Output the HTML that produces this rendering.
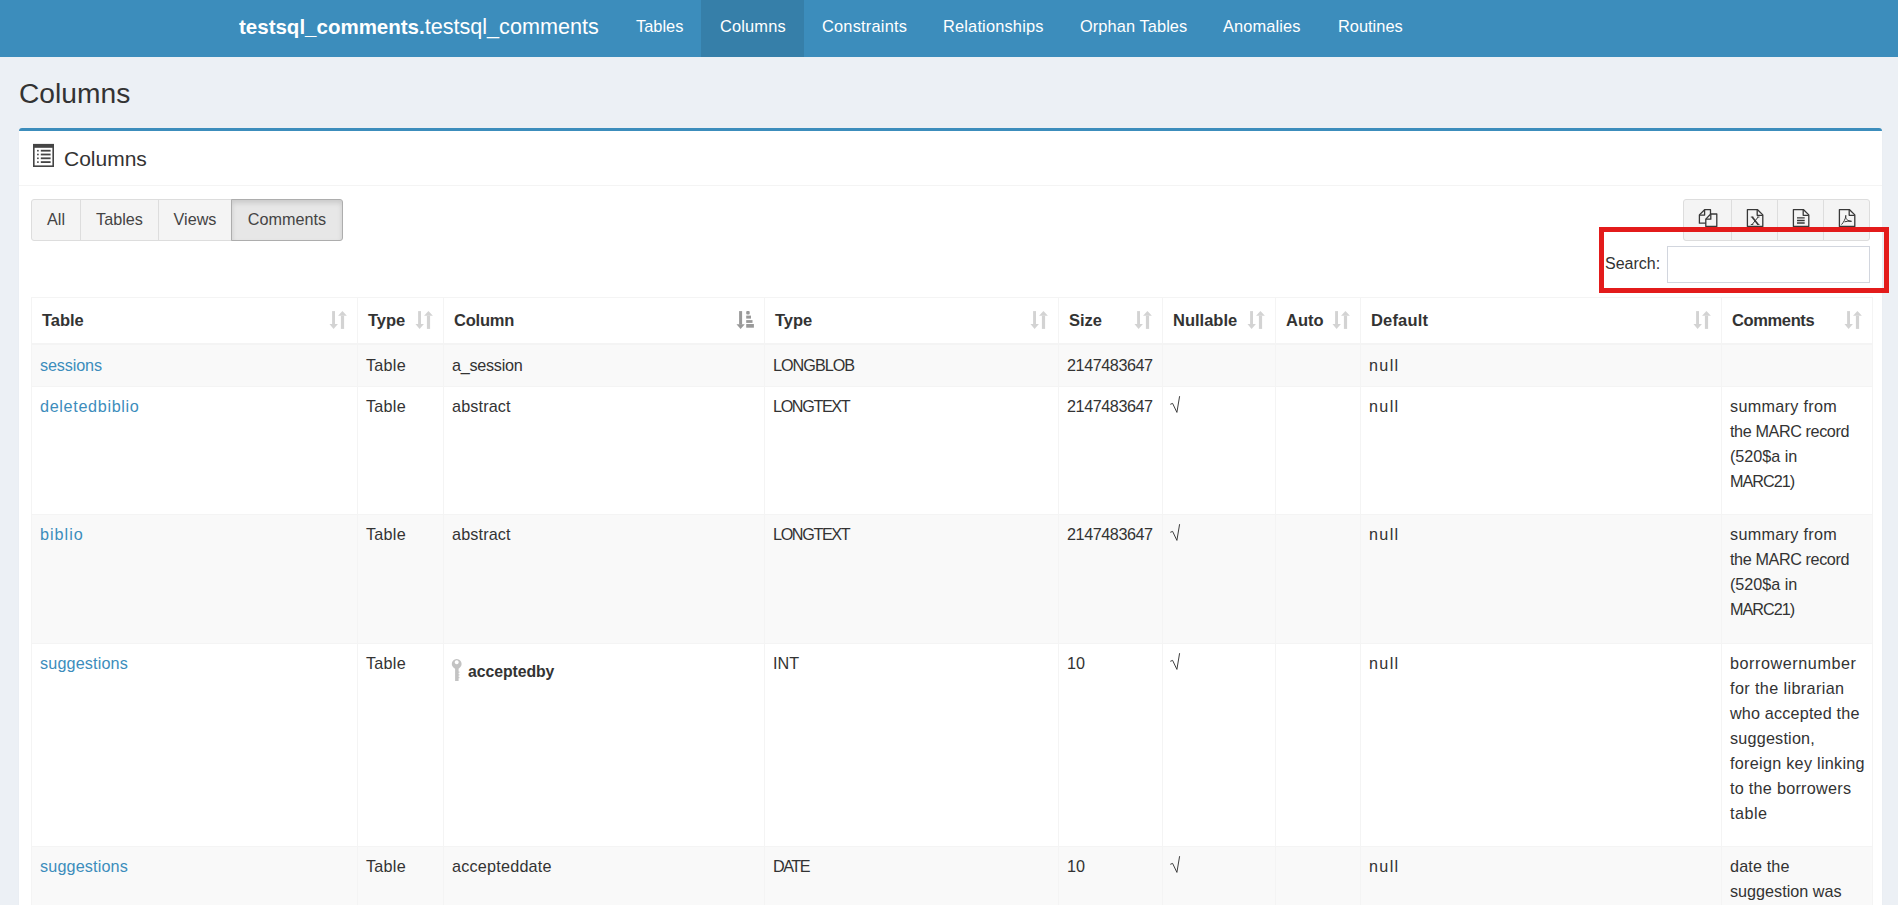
<!DOCTYPE html>
<html><head><meta charset="utf-8">
<style>
*{box-sizing:border-box;margin:0;padding:0}
html,body{width:1898px;height:905px;overflow:hidden}
body{background:#ecf0f5;font-family:"Liberation Sans",sans-serif;color:#333;position:relative;font-size:16.2px}
#nav{position:absolute;left:0;top:0;width:1898px;height:57px;background:#3c8dbc}
#nav .brand{position:absolute;left:239px;top:15px;color:#fff;white-space:nowrap;line-height:24px}
#nav .brand b{font-size:20.5px;font-weight:bold}
#nav .brand span{font-size:21.6px}
#nav .item{position:absolute;top:0;height:57px;color:#fff;font-size:16.4px;line-height:52px;white-space:nowrap}
#nav .active{position:absolute;left:701px;top:0;width:103px;height:57px;background:#367fa9}
#title{position:absolute;left:19px;top:75px;font-size:28.2px;line-height:36px;white-space:nowrap}
#box{position:absolute;left:19px;top:128px;width:1863px;height:800px;background:#fff;border-top:3px solid #3c8dbc;border-radius:3px;box-shadow:0 1px 1px rgba(0,0,0,0.1)}
#boxhead{position:absolute;left:0;top:0;width:1863px;height:55px;border-bottom:1px solid #f4f4f4}
#boxhead .t{position:absolute;left:45px;top:15px;font-size:21px;line-height:26px;white-space:nowrap}
.btngrp{position:absolute;top:199px;height:42px;display:flex}
.btn{position:relative;height:42px;background:#f4f4f4;border:1px solid #ddd;color:#444;font-size:16.2px;line-height:38px;text-align:center;white-space:nowrap}
.btn + .btn{margin-left:-1px}
.btn:first-child{border-radius:3px 0 0 3px}
.btn:last-child{border-radius:0 3px 3px 0}
.btn.on{background:#e7e7e7;border-color:#adadad;box-shadow:inset 0 3px 5px rgba(0,0,0,.125)}
#search{position:absolute;left:1605px;top:252px;font-size:16px;line-height:24px;white-space:nowrap}
#sinput{position:absolute;left:1667px;top:246px;width:203px;height:37px;border:1px solid #d2d6de;background:#fff}
#redbox{position:absolute;left:1599px;top:227px;width:290px;height:66px;border:5px solid #e31b1b}
.hline{position:absolute;left:31px;width:1842px;background:#f4f4f4}
.vline{position:absolute;top:297px;width:1px;height:608px;background:#f4f4f4}
.stripe{position:absolute;left:31px;width:1842px;background:#f9f9f9}
.th{position:absolute;top:308px;font-weight:bold;font-size:16.5px;line-height:25px;white-space:nowrap;color:#333}
.td{position:absolute;font-size:16.2px;line-height:25px;white-space:nowrap;color:#333}
.td a{color:#3c8dbc}
.sort{position:absolute;top:305px}
.chk,.key{position:absolute}
svg{overflow:visible}

</style></head><body>
<div id="nav">
<div class="active"></div>
<div class="brand"><b>testsql_comments.</b><span>testsql_comments</span></div>
<div class="item fit" style="left:636px">Tables</div>
<div class="item fit" style="left:720px;letter-spacing:0.16px">Columns</div>
<div class="item fit" style="left:822px;letter-spacing:0.20px">Constraints</div>
<div class="item fit" style="left:943px;letter-spacing:0.17px">Relationships</div>
<div class="item fit" style="left:1080px;letter-spacing:0.08px">Orphan Tables</div>
<div class="item fit" style="left:1223px;letter-spacing:0.12px">Anomalies</div>
<div class="item fit" style="left:1338px">Routines</div>
</div>
<svg width="0" height="0" style="position:absolute">
<defs>
<g id="sortboth" fill="#d3d3d3">
<rect x="7.1" y="6.1" width="2.9" height="13.2"/>
<path d="M4.5,18.9 H12.9 L8.6,23.9 Z"/>
<rect x="15.9" y="10.6" width="3.2" height="13.3"/>
<path d="M13.1,10.8 H21.9 L17.4,6.1 Z"/>
</g>
<g id="sortasc" fill="#999">
<rect x="9.1" y="6.1" width="3" height="13.5"/>
<path d="M6.5,19.2 H14.75 L10.6,23.9 Z"/>
<rect x="16.2" y="6.1" width="3.5" height="3.5" rx="1"/>
<rect x="16.2" y="10.6" width="4.8" height="3"/>
<rect x="16.2" y="15.1" width="6.3" height="2.8"/>
<rect x="16.2" y="19" width="7.7" height="3.7"/>
</g>
<g id="chk" fill="none" stroke="#333" stroke-width="0.95">
<path d="M0.3,8.3 L2.6,7.4 L6.9,16.4 L9.6,0.2"/>
</g>
<g id="key" fill="#c3c3c3">
<path d="M4.7,0 A4.9,4.9 0 1 1 4.69,0 Z M4.7,1.3 A2,2 0 1 0 4.71,1.3 Z" fill-rule="evenodd"/>
<rect x="3.1" y="7" width="3.5" height="15"/>
<rect x="6.2" y="12.5" width="1.2" height="1.3"/>
<rect x="6.2" y="15.2" width="1.2" height="1.3"/>
<rect x="6.2" y="17.9" width="1.2" height="1.3"/>
</g>
</defs>
</svg>
<div id="title">Columns</div>
<div id="box">
  <div id="boxhead"><div class="t">Columns</div></div>
</div>
<svg style="position:absolute;left:0;top:0" width="60" height="180" viewBox="0 0 60 180">
<g fill="#444">
<rect x="33" y="143.9" width="21" height="3.9"/>
<rect x="33" y="144" width="1.6" height="23"/>
<rect x="52.4" y="144" width="1.6" height="23"/>
<rect x="33" y="165.4" width="21" height="1.6"/>
<rect x="37.1" y="149.9" width="1.6" height="1.6"/>
<rect x="37.1" y="153.7" width="1.6" height="1.6"/>
<rect x="37.1" y="157.5" width="1.6" height="1.6"/>
<rect x="37.1" y="161.3" width="1.6" height="1.6"/>
<rect x="40.8" y="149.8" width="9.8" height="1.8"/>
<rect x="40.8" y="153.6" width="9.8" height="1.8"/>
<rect x="40.8" y="157.4" width="9.8" height="1.8"/>
<rect x="40.8" y="161.2" width="9.8" height="1.8"/>
</g>
</svg>
<div class="btngrp" style="left:31px">
  <div class="btn" style="width:50px">All</div>
  <div class="btn" style="width:79px">Tables</div>
  <div class="btn" style="width:74px">Views</div>
  <div class="btn on" style="width:112px">Comments</div>
</div>
<div class="btngrp" style="left:1683px">
  <div class="btn" style="width:49px"></div>
  <div class="btn" style="width:47px"></div>
  <div class="btn" style="width:47px"></div>
  <div class="btn" style="width:47px"></div>
</div>
<svg style="position:absolute;left:0;top:0" width="1898" height="240" viewBox="0 0 1898 240">
<g fill="none" stroke="#383838" stroke-width="1.3" stroke-linejoin="round">
<g transform="translate(1695,205)">
<path d="M10.8,18.2 H4.4 V9.9 L9.6,4.7 H15.5 V9"/>
<path d="M4.4,10.1 H9.6 V4.7"/>
<path d="M15.7,9 H21.8 V21.5 H10.8 V14.1 Z"/>
<path d="M10.8,14.2 H15.8 V9"/>
</g>
<g transform="translate(1743,205)">
<path d="M4.4,4.7 H14.6 L19.8,9.9 V21.5 H4.4 Z"/>
<path d="M14.2,4.7 V10.3 H19.8"/>
<path d="M9.2,12 L15.1,19.5" stroke-width="1.7"/><path d="M15.2,12 L9.1,19.5" stroke-width="1.0"/>
<path d="M7.8,12 H10.3 M14.1,12 H16.5 M7.8,19.5 H10.3 M14.1,19.5 H16.5" stroke-width="0.9"/>
</g>
<g transform="translate(1789,205)">
<path d="M4.4,4.7 H14.6 L19.8,9.9 V21.5 H4.4 Z"/>
<path d="M14.2,4.7 V10.3 H19.8"/>
<path d="M8,12.8 H15.7 M8,15.5 H15.7 M8,18 H15.7"/>
</g>
<g transform="translate(1835,205)">
<path d="M4.4,4.7 H14.6 L19.8,9.9 V21.5 H4.4 Z"/>
<path d="M14.2,4.7 V10.3 H19.8"/>
<path d="M6.5,19.6 C8.5,17.5 10.5,14 10.8,11 C11,9.8 10.4,10.2 10.8,12.5 C11.3,14.5 12.5,15.8 16.5,16.3 C14,16 11.5,16.2 9.5,16.8" stroke-width="1"/>
</g>
</g>
</svg>
<div id="search">Search:</div>
<div id="sinput"></div>
<div id="tbl">
<div class="hline" style="top:297px;height:1px"></div>
<div class="hline" style="top:343px;height:2px"></div>
<div class="stripe" style="top:345px;height:41px"></div>
<div class="hline" style="top:386px;height:1px"></div>
<div class="stripe" style="top:514px;height:129px"></div>
<div class="hline" style="top:514px;height:1px"></div>
<div class="hline" style="top:643px;height:1px"></div>
<div class="stripe" style="top:846px;height:59px"></div>
<div class="hline" style="top:846px;height:1px"></div>
<div class="vline" style="left:31px"></div>
<div class="vline" style="left:357px"></div>
<div class="vline" style="left:443px"></div>
<div class="vline" style="left:764px"></div>
<div class="vline" style="left:1058px"></div>
<div class="vline" style="left:1162px"></div>
<div class="vline" style="left:1275px"></div>
<div class="vline" style="left:1360px"></div>
<div class="vline" style="left:1721px"></div>
<div class="vline" style="left:1872px"></div>
<div class="th fit" style="left:42px;letter-spacing:-0.05px">Table</div>
<svg class="sort" style="left:325px" width="30" height="30" viewBox="0 0 30 30"><use href="#sortboth"/></svg>
<div class="th fit" style="left:368px;letter-spacing:-0.07px">Type</div>
<svg class="sort" style="left:411px" width="30" height="30" viewBox="0 0 30 30"><use href="#sortboth"/></svg>
<div class="th fit" style="left:454px;letter-spacing:-0.20px">Column</div>
<svg class="sort" style="left:730px" width="30" height="30" viewBox="0 0 30 30"><use href="#sortasc"/></svg>
<div class="th fit" style="left:775px;letter-spacing:-0.07px">Type</div>
<svg class="sort" style="left:1026px" width="30" height="30" viewBox="0 0 30 30"><use href="#sortboth"/></svg>
<div class="th fit" style="left:1069px">Size</div>
<svg class="sort" style="left:1130px" width="30" height="30" viewBox="0 0 30 30"><use href="#sortboth"/></svg>
<div class="th fit" style="left:1173px">Nullable</div>
<svg class="sort" style="left:1243px" width="30" height="30" viewBox="0 0 30 30"><use href="#sortboth"/></svg>
<div class="th fit" style="left:1286px">Auto</div>
<svg class="sort" style="left:1328px" width="30" height="30" viewBox="0 0 30 30"><use href="#sortboth"/></svg>
<div class="th fit" style="left:1371px;letter-spacing:0.17px">Default</div>
<svg class="sort" style="left:1689px" width="30" height="30" viewBox="0 0 30 30"><use href="#sortboth"/></svg>
<div class="th fit" style="left:1732px;letter-spacing:-0.37px">Comments</div>
<svg class="sort" style="left:1840px" width="30" height="30" viewBox="0 0 30 30"><use href="#sortboth"/></svg>
<div class="td fit" style="left:40px;top:353px;letter-spacing:-0.14px"><a>sessions</a></div>
<div class="td fit" style="left:366px;top:353px;letter-spacing:0.25px">Table</div>
<div class="td fit" style="left:452px;top:353px;letter-spacing:-0.27px">a_session</div>
<div class="td fit" style="left:773px;top:353px;letter-spacing:-1.00px">LONGBLOB</div>
<div class="td fit" style="left:1067px;top:353px;letter-spacing:-0.44px">2147483647</div>
<div class="td fit" style="left:1369px;top:353px;letter-spacing:1.33px">null</div>
<div class="td fit" style="left:40px;top:394px;letter-spacing:0.66px"><a>deletedbiblio</a></div>
<div class="td fit" style="left:366px;top:394px;letter-spacing:0.25px">Table</div>
<div class="td fit" style="left:452px;top:394px;letter-spacing:0.14px">abstract</div>
<div class="td fit" style="left:773px;top:394px;letter-spacing:-1.37px">LONGTEXT</div>
<div class="td fit" style="left:1067px;top:394px;letter-spacing:-0.44px">2147483647</div>
<svg class="chk" style="left:1170px;top:396px" width="12" height="18" viewBox="0 0 12 18"><use href="#chk"/></svg>
<div class="td fit" style="left:1369px;top:394px;letter-spacing:1.33px">null</div>
<div class="td fit" style="left:1730px;top:394px;letter-spacing:0.31px">summary from</div>
<div class="td fit" style="left:1730px;top:419px;letter-spacing:-0.40px">the MARC record</div>
<div class="td fit" style="left:1730px;top:444px;letter-spacing:-0.02px">(520$a in</div>
<div class="td fit" style="left:1730px;top:469px;letter-spacing:-1.00px">MARC21)</div>
<div class="td fit" style="left:40px;top:522px;letter-spacing:1.00px"><a>biblio</a></div>
<div class="td fit" style="left:366px;top:522px;letter-spacing:0.25px">Table</div>
<div class="td fit" style="left:452px;top:522px;letter-spacing:0.14px">abstract</div>
<div class="td fit" style="left:773px;top:522px;letter-spacing:-1.37px">LONGTEXT</div>
<div class="td fit" style="left:1067px;top:522px;letter-spacing:-0.44px">2147483647</div>
<svg class="chk" style="left:1170px;top:524px" width="12" height="18" viewBox="0 0 12 18"><use href="#chk"/></svg>
<div class="td fit" style="left:1369px;top:522px;letter-spacing:1.33px">null</div>
<div class="td fit" style="left:1730px;top:522px;letter-spacing:0.31px">summary from</div>
<div class="td fit" style="left:1730px;top:547px;letter-spacing:-0.40px">the MARC record</div>
<div class="td fit" style="left:1730px;top:572px;letter-spacing:-0.02px">(520$a in</div>
<div class="td fit" style="left:1730px;top:597px;letter-spacing:-1.00px">MARC21)</div>
<div class="td fit" style="left:40px;top:651px;letter-spacing:0.14px"><a>suggestions</a></div>
<div class="td fit" style="left:366px;top:651px;letter-spacing:0.25px">Table</div>
<svg class="key" style="left:452px;top:659px" width="12" height="24" viewBox="0 0 12 24"><use href="#key"/></svg>
<div class="td fit" style="left:468px;top:659px;font-weight:bold;font-size:15.8px;letter-spacing:-0.06px">acceptedby</div>
<div class="td fit" style="left:773px;top:651px">INT</div>
<div class="td fit" style="left:1067px;top:651px">10</div>
<svg class="chk" style="left:1170px;top:653px" width="12" height="18" viewBox="0 0 12 18"><use href="#chk"/></svg>
<div class="td fit" style="left:1369px;top:651px;letter-spacing:1.33px">null</div>
<div class="td fit" style="left:1730px;top:651px;letter-spacing:0.55px">borrowernumber</div>
<div class="td fit" style="left:1730px;top:676px;letter-spacing:0.38px">for the librarian</div>
<div class="td fit" style="left:1730px;top:701px;letter-spacing:0.17px">who accepted the</div>
<div class="td fit" style="left:1730px;top:726px;letter-spacing:0.20px">suggestion,</div>
<div class="td fit" style="left:1730px;top:751px;letter-spacing:0.28px">foreign key linking</div>
<div class="td fit" style="left:1730px;top:776px;letter-spacing:0.27px">to the borrowers</div>
<div class="td fit" style="left:1730px;top:801px;letter-spacing:0.50px">table</div>
<div class="td fit" style="left:40px;top:854px;letter-spacing:0.14px"><a>suggestions</a></div>
<div class="td fit" style="left:366px;top:854px;letter-spacing:0.25px">Table</div>
<div class="td fit" style="left:452px;top:854px;letter-spacing:0.21px">accepteddate</div>
<div class="td fit" style="left:773px;top:854px;letter-spacing:-1.47px">DATE</div>
<div class="td fit" style="left:1067px;top:854px">10</div>
<svg class="chk" style="left:1170px;top:856px" width="12" height="18" viewBox="0 0 12 18"><use href="#chk"/></svg>
<div class="td fit" style="left:1369px;top:854px;letter-spacing:1.33px">null</div>
<div class="td fit" style="left:1730px;top:854px;letter-spacing:0.14px">date the</div>
<div class="td fit" style="left:1730px;top:879px">suggestion was</div>
<div class="td fit" style="left:1730px;top:904px">accepted</div>
</div>
<div id="redbox"></div>
</body></html>
